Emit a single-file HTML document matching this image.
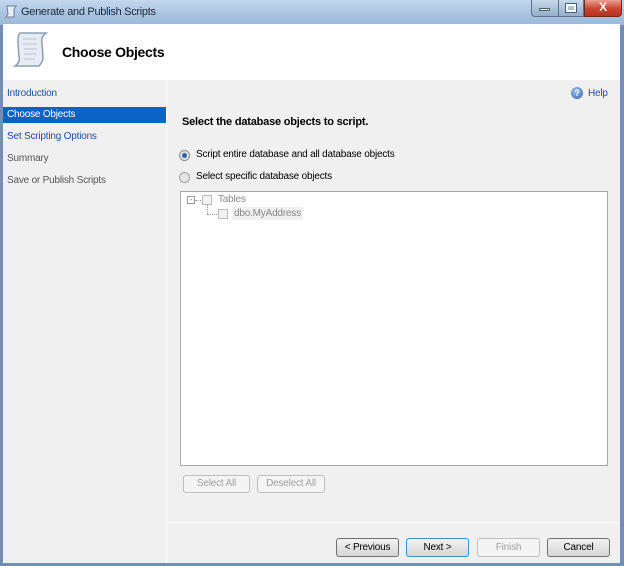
<!DOCTYPE html>
<html><head><style>
*{margin:0;padding:0;box-sizing:border-box}
body{width:624px;height:566px;overflow:hidden;font-family:"Liberation Sans",sans-serif;font-size:10px;letter-spacing:-0.2px;background:#6f8fb3;position:relative}
.a{position:absolute}
.title{left:0;top:0;width:624px;height:25px;background:linear-gradient(180deg,#c4d8ee,#a7c2e0 60%,#9cb9da);}
.btn{border:1px solid #707070;border-radius:3px;background:linear-gradient(#f3f3f3,#e3e3e3 50%,#d6d6d6);text-align:center;line-height:17px;color:#000}
.dis{border:1px solid #bfbfbf;border-radius:3px;background:#f4f4f4;text-align:center;line-height:16px;color:#a0a0a0}
.nav{left:7px;color:#1c4f9c}
</style></head><body>
<div class="a title"></div>
<svg class="a" style="left:4px;top:4px" width="14" height="16"><path d="M3 2h9l-2 3 0 8H2l2-3z" fill="#e8eef5" stroke="#6a7f96"/></svg>
<div class="a" style="left:21px;top:6px;font-size:11px;letter-spacing:-0.3px;color:#1e2a3a">Generate and Publish Scripts</div>
<div class="a" style="left:531px;top:0;width:28px;height:17px;border:1px solid #5a6f8a;border-top:none;border-radius:0 0 0 4px;background:linear-gradient(#c9d9ec,#93aeca)"></div>
<div class="a" style="left:539px;top:8px;width:11px;height:3px;background:#fff;border:1px solid #4b5f78"></div>
<div class="a" style="left:558px;top:0;width:26px;height:17px;border:1px solid #5a6f8a;border-top:none;background:linear-gradient(#c9d9ec,#93aeca)"></div>
<div class="a" style="left:566px;top:4px;width:10px;height:8px;border:2px solid #fff;outline:1px solid #4b5f78"></div>
<div class="a" style="left:584px;top:0;width:38px;height:17px;border:1px solid #6a2a22;border-top:none;border-radius:0 0 4px 0;background:linear-gradient(#e8a090,#c8452f 55%,#b8321e);color:#fff;font-weight:bold;text-align:center;font-size:12px;line-height:15px">X</div>
<div class="a" style="left:3px;top:24px;width:617px;height:539px;background:#f0f0f0"></div>
<div class="a" style="left:3px;top:24px;width:617px;height:56px;background:#fff"></div>
<svg class="a" style="left:10px;top:30px" width="40" height="42"><path d="M10 3h26c-4 3-5 6-4 10l1 14c0 4-2 7-4 9H5c3-2 5-5 4-9L8 13c0-5 0-8 2-10z" fill="#e6ecf3" stroke="#8ea0b4" stroke-width="1.5"/><path d="M13 9h14M13 14h14M14 19h13M14 24h12M14 29h11" stroke="#b8c4d2"/></svg>
<div class="a" style="left:62px;top:44px;font-size:14px;letter-spacing:-0.3px;font-weight:bold;color:#000">Choose Objects</div>
<div class="a" style="left:166px;top:80px;width:1px;height:483px;background:#fff"></div>
<div class="a nav" style="top:88px">Introduction</div>
<div class="a" style="left:3px;top:107px;width:163px;height:16px;background:#0a64c8"></div>
<div class="a nav" style="top:109px;color:#fff">Choose Objects</div>
<div class="a nav" style="top:131px">Set Scripting Options</div>
<div class="a nav" style="top:153px;color:#555">Summary</div>
<div class="a nav" style="top:175px;color:#555">Save or Publish Scripts</div>
<div class="a" style="left:571px;top:87px;width:12px;height:12px;border-radius:50%;background:radial-gradient(circle at 40% 35%,#9cc3f0,#2d64b8);color:#fff;font-size:9px;font-weight:bold;text-align:center;line-height:12px">?</div>
<div class="a" style="left:588px;top:88px;color:#1c4f9c">Help</div>
<div class="a" style="left:182px;top:116px;font-weight:bold;font-size:11px;letter-spacing:-0.2px;color:#000">Select the database objects to script.</div>
<div class="a" style="left:179px;top:150px;width:11px;height:11px;border-radius:50%;border:1px solid #8c8c8c;background:radial-gradient(circle,#2a5fae 0 2px,#e8e8e8 3px)"></div>
<div class="a" style="left:196px;top:149px;color:#000">Script entire database and all database objects</div>
<div class="a" style="left:179px;top:172px;width:11px;height:11px;border-radius:50%;border:1px solid #a0a0a0;background:#e4e4e4"></div>
<div class="a" style="left:196px;top:171px;color:#000">Select specific database objects</div>
<div class="a" style="left:180px;top:191px;width:428px;height:275px;background:#fff;border:1px solid #a8a8a8"></div>
<div class="a" style="left:187px;top:196px;width:8px;height:8px;border:1px solid #999;font-size:8px;line-height:6px;text-align:center;color:#666">-</div>
<div class="a" style="left:195px;top:200px;width:6px;border-top:1px dotted #999"></div>
<div class="a" style="left:202px;top:195px;width:10px;height:10px;border:1px solid #bbb;background:#f2f2f2"></div>
<div class="a" style="left:218px;top:194px;color:#888">Tables</div>
<div class="a" style="left:207px;top:205px;height:9px;border-left:1px dotted #999"></div>
<div class="a" style="left:207px;top:214px;width:10px;border-top:1px dotted #999"></div>
<div class="a" style="left:218px;top:209px;width:10px;height:10px;border:1px solid #bbb;background:#f2f2f2"></div>
<div class="a" style="left:232px;top:207px;color:#888;background:#f0f0f0;padding:1px 2px">dbo.MyAddress</div>
<div class="a dis" style="left:183px;top:475px;width:67px;height:18px">Select All</div>
<div class="a dis" style="left:257px;top:475px;width:68px;height:18px">Deselect All</div>
<div class="a" style="left:167px;top:522px;width:453px;height:1px;background:#fff"></div>
<div class="a btn" style="left:336px;top:538px;width:63px;height:19px">&lt; Previous</div>
<div class="a btn" style="left:406px;top:538px;width:63px;height:19px;border-color:#3c90c8">Next &gt;</div>
<div class="a dis" style="left:477px;top:538px;width:63px;height:19px;line-height:17px">Finish</div>
<div class="a btn" style="left:547px;top:538px;width:63px;height:19px">Cancel</div>
</body></html>
